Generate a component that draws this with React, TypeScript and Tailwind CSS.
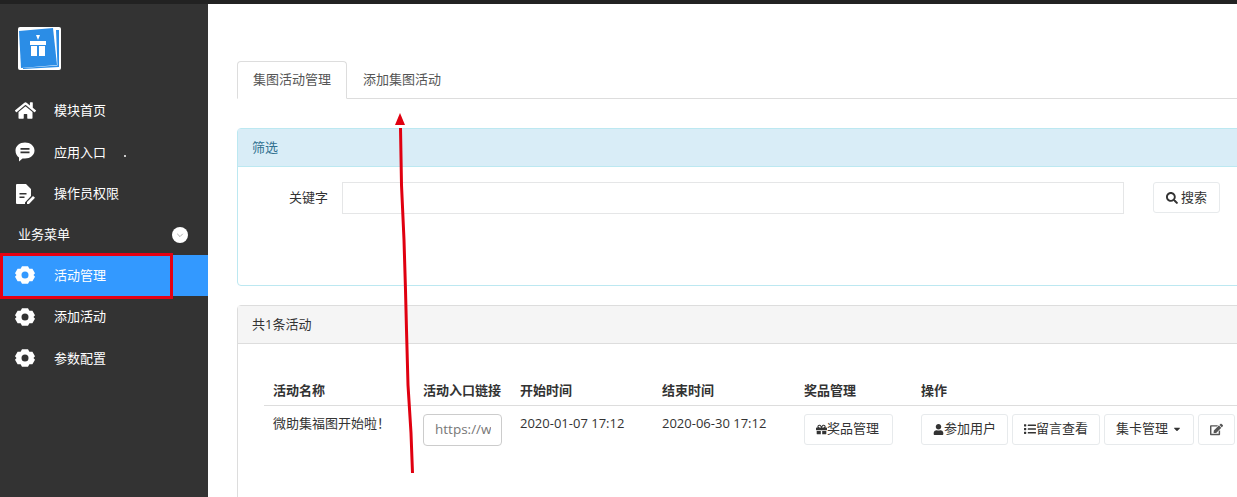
import { FaCaretDown, FaEdit, FaGift, FaHome, FaList, FaSearch, FaUser } from "react-icons/fa";
import { ReactNode } from "react";

const font = { fontFamily: '"Open Sans", "Noto Sans CJK SC", sans-serif' };

function Gear() {
  return (
    <svg viewBox="0 0 20 20" className="w-[20px] h-[20px]" fill="white">
      <path
        fillRule="evenodd"
        d="M7 1.2h6l1.4 2.6 3-.1 2.6 4.6-1.5 1.7 1.5 1.7-2.6 4.6-3-.1L13 18.8H7l-1.4-2.6-3 .1L0 11.7l1.5-1.7L0 8.3l2.6-4.6 3 .1zM10 6.5a3.5 3.5 0 1 0 0 7 3.5 3.5 0 0 0 0-7z"
      />
    </svg>
  );
}

function Comment() {
  return (
    <svg viewBox="0 0 20 20" className="w-[20px] h-[20px]">
      <path d="M10 .5c5.3 0 9.5 3.5 9.5 8s-4.200 8-9.500 8H7.500L4 19.500v-4C1.800 14 .5 11.500.5 8.500c0-4.500 4.200-8 9.500-8z" fill="white" />
      <path d="M5.500 6h9v1.800h-9zM5.500 9.500h9v1.800h-9z" fill="#333" />
    </svg>
  );
}

function FileEdit() {
  return (
    <svg viewBox="0 0 20 20" className="w-[20px] h-[20px]">
      <path d="M2 0h9l5 5v7l-6 6.500V20H2a1 1 0 0 1-1-1V1a1 1 0 0 1 1-1z" fill="white" />
      <path d="M4.500 9h7v1.600h-7zM4.500 12.500h5v1.600h-5z" fill="#333" />
      <path d="M12 18l6-6 2 1.800-6 6.200h-2z" fill="white" />
    </svg>
  );
}

function NavItem({ icon, label, active }: { icon: ReactNode; label: string; active?: boolean }) {
  return (
    <div className={`flex items-center h-[41.500px] pl-[15px] ${active ? "bg-[#3399ff]" : ""}`}>
      <span className="w-[39px] flex items-center">{icon}</span>
      <span className="text-[13px] text-white">{label}</span>
    </div>
  );
}

function Btn({ children, className = "" }: { children: ReactNode; className?: string }) {
  return (
    <button className={`h-[31px] px-[11px] flex items-center shrink-0 bg-white border border-[#e7eaec] rounded-[3px] text-[13px] text-[#333] whitespace-nowrap ${className}`}>
      {children}
    </button>
  );
}

export default function App() {
  const columns = ["活动名称", "活动入口链接", "开始时间", "结束时间", "奖品管理", "操作"];
  const widths = ["w-[150px]", "w-[94px]", "w-[142px]", "w-[142px]", "w-[117px]", "w-[340px]"];

  return (
    <div className="relative h-[497px] w-[1237px] overflow-hidden bg-white flex flex-col" style={font}>
      <div className="h-[4px] bg-[#222] shrink-0" />
      <div className="flex flex-1 min-h-0">
        {/* Sidebar */}
        <aside className="w-[208px] shrink-0 bg-[#333]">
          <div className="pl-[18px] pt-[23px] h-[86px]">
            <svg viewBox="0 0 44 44" className="w-[44px] h-[44px]">
              <rect x="0" y="0" width="43" height="43" rx="2" fill="white" />
              <path d="M1 4 L35 1 L39 38 L3 41z" fill="#2b8de6" />
              <path d="M38 3 L41 3 L41 40 L5 42 L5 41 L39.500 38.500z" fill="#2b8de6" />
              <path d="M12 14h16v4H12zM13 19h6v10h-6zM21 19h6v10h-6zM18 8l2 5 2-5" fill="white" />
            </svg>
          </div>
          <NavItem icon={<FaHome color="white" size={21} />} label="模块首页" />
          <NavItem
            icon={<Comment />}
            label="应用入口"
          />
          <NavItem icon={<FileEdit />} label="操作员权限" />
          <div className="flex items-center justify-between h-[40px] pl-[18px] pr-[20px] text-[13px] text-white">
            <span>业务菜单</span>
            <span className="w-[16px] h-[16px] rounded-full bg-white flex items-center justify-center">
              <svg viewBox="0 0 10 10" className="w-[8px] h-[8px]" fill="none" stroke="#999" strokeWidth="1">
                <path d="M1.500 3.500L5 7l3.500-3.500" />
              </svg>
            </span>
          </div>
          <NavItem icon={<Gear />} label="活动管理" active />
          <NavItem icon={<Gear />} label="添加活动" />
          <NavItem icon={<Gear />} label="参数配置" />
        </aside>

        {/* Main */}
        <main className="flex-1 min-w-0 pl-[29px] pt-[57px] overflow-hidden">
          <div className="w-[1100px]">
            <div className="flex h-[38px] border-b border-[#dddddd] text-[13px] text-[#555]">
              <div className="w-[110px] h-[38px] flex items-center justify-center bg-white border border-[#ddd] border-b-white rounded-t-[4px]">集图活动管理</div>
              <div className="px-[16px] flex items-center">添加集图活动</div>
            </div>

            <section className="mt-[29px] h-[158px] border border-[#bce8f1] rounded-[4px]">
              <div className="h-[38px] px-[14px] flex items-center bg-[#d9edf7] border-b border-[#bce8f1] text-[13px] text-[#31708f]">筛选</div>
              <div className="flex items-start pt-[15px]">
                <label className="w-[90px] h-[31px] flex items-center justify-end text-[13px] text-[#333]">关键字</label>
                <div className="ml-[14px] w-[782px] h-[32px] border border-[#e5e6e7]" />
                <Btn className="ml-[29px] px-[12px]">
                  <FaSearch size={12} className="mr-[3px] text-[#333]" />
                  搜索
                </Btn>
              </div>
            </section>

            <section className="mt-[19px] h-[300px] border border-[#ddd] rounded-[4px]">
              <div className="h-[38px] px-[14px] flex items-center bg-[#f5f5f5] border-b border-[#ddd] text-[13px] text-[#333]">共1条活动</div>
              <table className="ml-[26px] mt-[33px] border-collapse table-fixed text-[13px] text-[#333]">
                <thead>
                  <tr className="border-b border-[#dddddd] h-[28px]">
                    {columns.map((c, i) => (
                      <th key={c} className={`${widths[i]} px-[9px] text-left font-bold text-[13px] whitespace-nowrap`}>{c}</th>
                    ))}
                  </tr>
                </thead>
                <tbody>
                  <tr>
                    <td className="px-[9px] pt-[8px] align-top whitespace-nowrap">微助集福图开始啦！</td>
                    <td className="px-[9px] pt-[8px] align-top">
                      <div className="w-[79px] h-[32px] flex items-center pl-[11px] overflow-hidden border border-[#ccc] rounded-[4px] text-[#777] text-[13.500px] whitespace-nowrap">
                        <span className="w-[56px] overflow-hidden">https://weixin</span>
                      </div>
                    </td>
                    <td className="px-[9px] pt-[8px] align-top whitespace-nowrap">2020-01-07 17:12</td>
                    <td className="px-[9px] pt-[8px] align-top whitespace-nowrap">2020-06-30 17:12</td>
                    <td className="px-[9px] pt-[8px] align-top">
                      <Btn className="w-[89px]"><FaGift size={11} />奖品管理</Btn>
                    </td>
                    <td className="px-[9px] pt-[8px] align-top">
                      <div className="flex gap-[4px]">
                        <Btn><FaUser size={11} />参加用户</Btn>
                        <Btn><FaList size={12} />留言查看</Btn>
                        <Btn>集卡管理<FaCaretDown size={10} className="ml-[4px]" /></Btn>
                        <Btn><FaEdit size={13} className="text-[#555]" /></Btn>
                      </div>
                    </td>
                  </tr>
                </tbody>
              </table>
            </section>
          </div>
        </main>
      </div>

      {/* Red annotations over the screenshot */}
      <span className="absolute left-[124px] top-[155px] w-[2px] h-[2px] rounded-full bg-white" />
      <div className="absolute left-0 top-[253px] w-[173px] h-[46px] border-[3px] border-[#e50012] pointer-events-none" />
      <svg className="absolute left-0 top-0 pointer-events-none" width="1237" height="497" fill="none">
        <path d="M400.500 128 L401.500 185 L404 240 L405.500 290 L406.500 330 L408 385 L411 433 L412.500 473" stroke="#e00010" strokeWidth="3" />
        <path d="M400 113 L405 125 L395 125z" fill="#e00010" />
      </svg>
    </div>
  );
}
